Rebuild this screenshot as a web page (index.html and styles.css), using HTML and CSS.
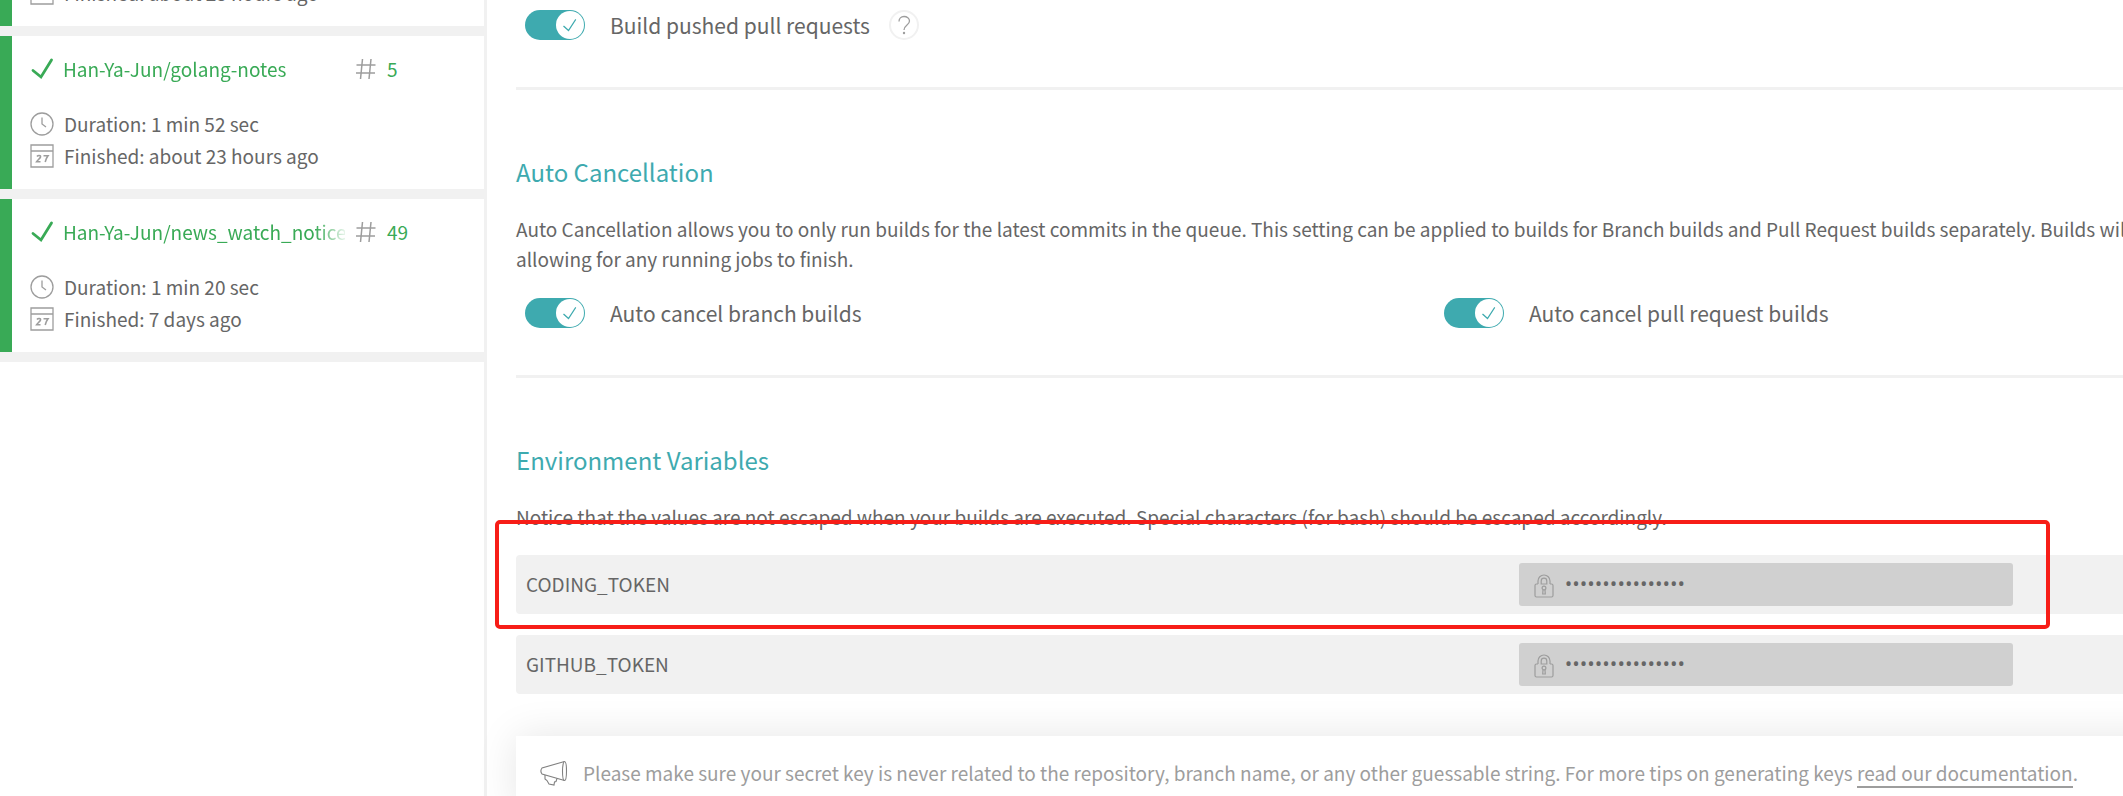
FILE: index.html
```html
<!DOCTYPE html>
<html lang="en">
<head>
    <meta charset="UTF-8">
    <meta name="viewport" content="width=device-width, initial-scale=1.0">
    <title>Repository Settings</title>
    <link rel="stylesheet" href="styles.css">
</head>
<body>

    <!-- Shared icons -->
    <svg class="icon-defs" aria-hidden="true">
        <symbol id="icon-passed" viewBox="0 0 24 24">
            <path d="M3 13.500l8 6.500L21.500 3" fill="none" stroke="#39aa56" stroke-width="2.800" stroke-linecap="round"/>
        </symbol>
        <symbol id="icon-hash" viewBox="0 0 24 24">
            <path d="M8.500 2L6.500 22M17 2l-2 20M2.500 8h19M2 16h19" fill="none" stroke="#9d9d9d" stroke-width="1.500"/>
        </symbol>
        <symbol id="icon-clock" viewBox="0 0 24 24">
            <circle cx="12" cy="12" r="11" fill="none" stroke="#9d9d9d" stroke-width="1.300"/>
            <path d="M12 5.500V12l4 3" fill="none" stroke="#9d9d9d" stroke-width="1.300"/>
        </symbol>
        <symbol id="icon-calendar" viewBox="0 0 24 24">
            <path d="M1 1h22v22H1zM1 7h22" fill="none" stroke="#9d9d9d" stroke-width="1.300"/>
            <path d="M7 12.500c1-1.500 4-1.500 3.500.5-.3 1.500-3 3-4 4.800h4M13.500 11.800h4.500c-1.500 2-2.300 4-2.800 6.200" fill="none" stroke="#9d9d9d" stroke-width="1.600"/>
        </symbol>
        <symbol id="icon-check" viewBox="0 0 16 16">
            <path d="M1.500 9l5 4.500L14 2" fill="none" stroke="#3eaaaf" stroke-width="1.300"/>
        </symbol>
        <symbol id="icon-lock" viewBox="0 0 20 24">
            <path d="M4 10V7a6 6 0 0 1 12 0v3M7.200 10V7a2.800 2.800 0 0 1 5.600 0v3z" fill="none" stroke="#9d9d9d" stroke-width="1.200"/>
            <path d="M4 10H2.500A1.500 1.500 0 0 0 1 11.500v10A1.500 1.500 0 0 0 2.500 23h15a1.500 1.500 0 0 0 1.500-1.500v-10a1.500 1.500 0 0 0-1.500-1.500H16" fill="none" stroke="#9d9d9d" stroke-width="1.200"/>
            <circle cx="10" cy="14" r="1.900" fill="none" stroke="#9d9d9d" stroke-width="1.200"/>
            <path d="M9 16l-.3 4h2.600L11 16" fill="none" stroke="#9d9d9d" stroke-width="1.200"/>
        </symbol>
    </svg>

    <div class="page">
        <aside class="sidebar">
            <ul class="repo-list">
                <li class="repo">
                    <div class="repo-title">
                        <svg class="icon"><use href="#icon-passed"/></svg>
                        <a class="repo-name" href="#">Han-Ya-Jun/HelloGo</a>
                        <svg class="icon"><use href="#icon-hash"/></svg>
                        <a class="repo-build" href="#">12</a>
                    </div>
                    <p class="repo-info"><svg class="icon"><use href="#icon-clock"/></svg>Duration: 1 min 12 sec</p>
                    <p class="repo-info"><svg class="icon"><use href="#icon-calendar"/></svg>Finished: about 23 hours ago</p>
                </li>
                <li class="repo">
                    <div class="repo-title">
                        <svg class="icon"><use href="#icon-passed"/></svg>
                        <a class="repo-name" href="#">Han-Ya-Jun/golang-notes</a>
                        <svg class="icon"><use href="#icon-hash"/></svg>
                        <a class="repo-build" href="#">5</a>
                    </div>
                    <p class="repo-info"><svg class="icon"><use href="#icon-clock"/></svg>Duration: 1 min 52 sec</p>
                    <p class="repo-info"><svg class="icon"><use href="#icon-calendar"/></svg>Finished: about 23 hours ago</p>
                </li>
                <li class="repo">
                    <div class="repo-title">
                        <svg class="icon"><use href="#icon-passed"/></svg>
                        <a class="repo-name" href="#">Han-Ya-Jun/news_watch_notice</a>
                        <svg class="icon"><use href="#icon-hash"/></svg>
                        <a class="repo-build" href="#">49</a>
                    </div>
                    <p class="repo-info"><svg class="icon"><use href="#icon-clock"/></svg>Duration: 1 min 20 sec</p>
                    <p class="repo-info"><svg class="icon"><use href="#icon-calendar"/></svg>Finished: 7 days ago</p>
                </li>
            </ul>
        </aside>

        <main class="settings">
            <section class="section">
                <div class="switches">
                    <div class="switch-row">
                        <span class="switch">
                            <input type="checkbox" id="build-pull-requests" checked>
                            <svg class="switch-check"><use href="#icon-check"/></svg>
                        </span>
                        <label for="build-pull-requests">Build pushed pull requests</label>
                        <button class="help" type="button" aria-label="Help">
                            <svg viewBox="0 0 14 20"><path d="M2 6.500C2 3.500 4 1.500 7 1.500s5.500 2 5.500 4.500c0 4-5.500 4-5.500 9" fill="none" stroke="#9d9d9d" stroke-width="1.300"/><circle cx="7" cy="18" r="1.200" fill="#9d9d9d"/></svg>
                        </button>
                    </div>
                </div>
            </section>

            <section class="section">
                <h2>Auto Cancellation</h2>
                <p class="section-text">Auto Cancellation allows you to only run builds for the latest commits in the queue. This setting can be applied to builds for Branch builds and Pull Request builds separately. Builds will only be canceled if they are waiting to run,<br>allowing for any running jobs to finish.</p>
                <div class="switches">
                    <div class="switch-row">
                        <span class="switch">
                            <input type="checkbox" id="cancel-branch" checked>
                            <svg class="switch-check"><use href="#icon-check"/></svg>
                        </span>
                        <label for="cancel-branch">Auto cancel branch builds</label>
                    </div>
                    <div class="switch-row">
                        <span class="switch">
                            <input type="checkbox" id="cancel-pull" checked>
                            <svg class="switch-check"><use href="#icon-check"/></svg>
                        </span>
                        <label for="cancel-pull">Auto cancel pull request builds</label>
                    </div>
                </div>
            </section>

            <section class="section">
                <h2>Environment Variables</h2>
                <p class="section-text">Notice that the values are not escaped when your builds are executed. Special characters (for bash) should be escaped accordingly.</p>
                <ul class="env-list">
                    <li class="env-row marked">
                        <label class="env-name" for="coding-token">CODING_TOKEN</label>
                        <div class="env-value">
                            <svg class="env-lock"><use href="#icon-lock"/></svg>
                            <input type="text" id="coding-token" value="••••••••••••••••" readonly>
                        </div>
                    </li>
                    <li class="env-row">
                        <label class="env-name" for="github-token">GITHUB_TOKEN</label>
                        <div class="env-value">
                            <svg class="env-lock"><use href="#icon-lock"/></svg>
                            <input type="text" id="github-token" value="••••••••••••••••" readonly>
                        </div>
                    </li>
                </ul>
                <div class="notice">
                    <svg class="notice-icon" viewBox="0 0 28 26" fill="none" stroke="#808080" stroke-width="1.100">
                        <path d="M24.500 1.500L2 8c-1.500 2-1.500 4 0 6l22.500 6.500"/>
                        <ellipse cx="24.500" cy="11" rx="2" ry="9.500"/>
                        <path d="M5 15v4l2 1.500 2 3.500 5 1 .5-3 1.500-.5 1-3"/>
                    </svg>
                    <p>Please make sure your secret key is never related to the repository, branch name, or any other guessable string. For more tips on generating keys <a href="#">read our documentation</a>.</p>
                </div>
            </section>
        </main>
    </div>

</body>
</html>
```
FILE: styles.css
```css
/* General Styling */
* {
    box-sizing: border-box;
}

body {
    margin: 0;
    overflow: hidden;
    font-family: "Noto Sans CJK SC", "Open Sans", sans-serif;
    font-size: 19px;
    line-height: 30px;
    color: #666;
    background: white;
}

h2, p, ul {
    margin: 0;
    padding: 0;
}

ul {
    list-style: none;
}

.icon-defs {
    display: none;
}

.icon {
    width: 24px;
    height: 24px;
    flex: none;
}

.page {
    display: flex;
    width: 112%;
    height: 100vh;
}

/* Sidebar */
.sidebar {
    flex: none;
    width: 487px;
    border-right: 3px solid #f1f1f1;
    overflow: hidden;
}

.repo-list {
    margin-top: -137px;
}

.repo {
    padding: 17px 18px 17px 30px;
    border-top: 10px solid #f1f1f1;
    background: linear-gradient(to right, #39aa56 12px, white 12px);
    background-clip: padding-box;
}

.repo:last-child {
    border-bottom: 10px solid #f1f1f1;
}

.repo-title {
    display: flex;
    align-items: center;
    height: 32px;
    margin-bottom: 23px;
}

.repo-name {
    width: 282px;
    margin: 0 9px;
    overflow: hidden;
    white-space: nowrap;
    mask-image: linear-gradient(to right, black 252px, transparent 286px);
}

.repo-name, .repo-build {
    color: #39aa56;
    text-decoration: none;
}

.repo-build {
    margin-left: 9px;
}

.repo-info {
    display: flex;
    align-items: center;
    gap: 10px;
    height: 32px;
}

/* Settings */
.settings {
    flex: 1;
    min-width: 0;
    padding: 0 24px 0 29px;
}

.section {
    padding-bottom: 47px;
    border-bottom: 3px solid #f1f1f1;
}

.section:first-child {
    padding-top: 10px;
}

.section:last-child {
    border-bottom: none;
}

h2 {
    padding-top: 63px;
    margin-bottom: 23px;
    font-size: 24px;
    font-weight: 400;
    line-height: 38px;
    color: #3eaaaf;
}

.section-text {
    white-space: nowrap;
}

.switches {
    display: grid;
    grid-template-columns: 1fr 1fr;
    column-gap: 9px;
    padding-left: 9px;
}

.section-text + .switches {
    margin-top: 24px;
}

.switch-row {
    display: flex;
    align-items: center;
    font-size: 21px;
}

.switch {
    position: relative;
    width: 60px;
    height: 30px;
    margin-right: 25px;
}

.switch input {
    display: block;
    appearance: none;
    width: 60px;
    height: 30px;
    margin: 0;
    border-radius: 15px;
    background: #3eaaaf;
    cursor: pointer;
}

/* Knob with the tick inside */
.switch-check {
    position: absolute;
    top: 1px;
    right: 1px;
    width: 28px;
    height: 28px;
    padding: 6px;
    border-radius: 50%;
    background: white;
    pointer-events: none;
}

.help {
    display: flex;
    align-items: center;
    justify-content: center;
    width: 30px;
    height: 30px;
    margin-left: 19px;
    padding: 0;
    border: 2px solid #f1f1f1;
    border-radius: 50%;
    background: white;
    cursor: pointer;
}

.help svg {
    width: 14px;
    height: 20px;
}

/* Environment variables */
.env-list {
    margin-top: 23px;
}

.env-row {
    position: relative;
    display: flex;
    align-items: center;
    height: 59px;
    margin-bottom: 21px;
    padding: 0 341px 0 10px;
    border-radius: 4px;
    background: #f1f1f1;
}

.env-name {
    flex: 1;
    padding-bottom: 2px;
}

.env-value {
    display: flex;
    align-items: center;
    gap: 11px;
    width: 494px;
    height: 43px;
    padding: 0 15px;
    border-radius: 3px;
    background: #d0d0d0;
}

.env-lock {
    flex: none;
    width: 20px;
    height: 24px;
    margin-top: 2px;
}

.env-value input {
    flex: 1;
    min-width: 0;
    padding: 0 0 3px;
    border: none;
    outline: none;
    background: none;
    font-family: "Open Sans", sans-serif;
    font-size: 20px;
    color: #666;
}

/* Red frame around a row */
.marked::after {
    content: "";
    position: absolute;
    top: -35px;
    left: -21px;
    right: 304px;
    bottom: -15px;
    border: 4px solid #f71d17;
    border-radius: 5px;
    pointer-events: none;
}

.notice {
    display: flex;
    align-items: center;
    gap: 15px;
    height: 76px;
    margin-top: 42px;
    padding: 0 24px 2px;
    background: white;
    box-shadow: 0 0 40px rgba(0, 0, 0, 0.1);
    color: #9d9d9d;
}

.notice-icon {
    width: 28px;
    height: 26px;
    flex: none;
}

.notice a {
    color: #9d9d9d;
    text-decoration: none;
    border-bottom: 2px solid #9d9d9d;
}
```
